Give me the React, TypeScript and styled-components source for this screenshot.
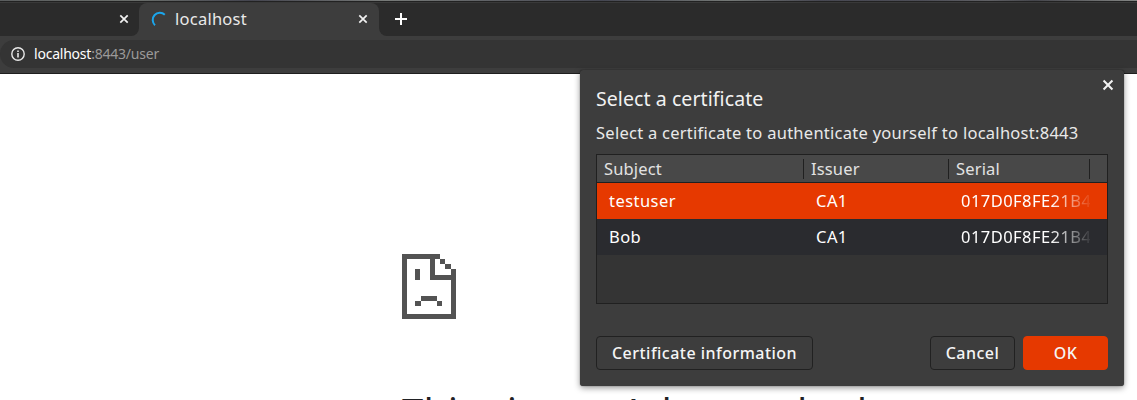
import React from 'react';
import styled, { createGlobalStyle, css } from 'styled-components';

const GlobalStyle = createGlobalStyle`
  * { box-sizing: border-box; }
  html, body { margin: 0; height: 100%; overflow: hidden; background: #fff; }
  body, button { font-family: "Noto Sans", "Open Sans", sans-serif; }
  svg { display: block; flex: none; }
`;

const Window = styled.div`
  position: relative;
  height: 400px;
  display: flex;
  flex-direction: column;
  overflow: hidden;
`;

const Frame = styled.div`
  height: 3px;
  flex: none;
  background: linear-gradient(90deg, #5a5d5e, #6b6f6c 12%, #44454f 22%, #777a78 34%, #454752 53%, #747876 64%, #474852 72%, #4d4e57 81%, #5f6064 87%, #45464c 91%, #858785) top / 100% 1px no-repeat, linear-gradient(#222 2px, #393939 2px);
`;

const TabStrip = styled.div`
  display: flex;
  height: 33px;
  flex: none;
  background: #3d3d3d;
`;

const tabLayout = css`
  display: flex;
  align-items: center;
  height: 33px;
  padding-bottom: 1px;
`;

const IdleTab = styled.div`
  ${tabLayout}
  width: 139px;
  justify-content: flex-end;
  padding-right: 10px;
  background: #2b2b2b;
  border-bottom-right-radius: 8px;
`;

const ActiveTabSlot = styled.div`
  width: 240px;
  background: #2b2b2b;
`;

const ActiveTab = styled.div`
  ${tabLayout}
  padding: 0 11px 1px 12px;
  background: #3d3d3d;
  border-radius: 8px 8px 0 0;
`;

const TabTitle = styled.span`
  flex: 1;
  padding-left: 8px;
  color: #e9e9e9;
  font-size: 16.5px;
  line-height: 22px;
  letter-spacing: 0.25px;
`;

const StripRest = styled.div`
  ${tabLayout}
  flex: 1;
  padding-left: 15px;
  background: #2b2b2b;
  border-bottom-left-radius: 8px;
`;

const Toolbar = styled.div`
  height: 38px;
  flex: none;
  padding: 4px 0 5px;
  background: #3d3d3d;
  border-bottom: 1px solid #1f1f1f;
`;

const AddressBar = styled.div`
  display: flex;
  align-items: center;
  height: 28px;
  padding-left: 11px;
  gap: 9px;
  background: #343434;
  border-radius: 14px 0 0 14px;
`;

const Url = styled.span`
  color: #9b9a99;
  font-size: 14px;
  line-height: 20px;
  letter-spacing: -0.22px;
`;

const Host = styled.span`
  color: #fff;
`;

const Page = styled.main`
  flex: 1;
  padding: 180px 0 0 402px;
  overflow: hidden;
`;

const ErrorTitle = styled.h1`
  margin: 66px 0 0;
  color: #202124;
  font-size: 38px;
  font-weight: 400;
  line-height: 52px;
  letter-spacing: 0.7px;
  white-space: nowrap;
`;

const Dialog = styled.section`
  position: absolute;
  left: 580px;
  top: 70px;
  width: 544px;
  height: 316px;
  display: flex;
  flex-direction: column;
  padding: 16px;
  background: #3d3d3d;
  border-radius: 3px;
  box-shadow: 0 0 1px rgba(0, 0, 0, 0.7), 0 2px 6px rgba(0, 0, 0, 0.4);
  color: #f2f2f2;
`;

const CloseDialog = styled.button`
  position: absolute;
  top: 9px;
  right: 10px;
  padding: 0;
  border: 0;
  background: none;
`;

const DialogTitle = styled.h2`
  margin: 0;
  font-size: 19.5px;
  font-weight: 400;
  line-height: 26px;
  letter-spacing: 0.08px;
`;

const Prompt = styled.p`
  margin: 9px 0 10px;
  color: #e9e9e9;
  font-size: 16.5px;
  line-height: 23px;
  letter-spacing: 0.265px;
  white-space: nowrap;
`;

const Table = styled.div`
  height: 150px;
  border: 1px solid #202020;
  background: #343434;
  font-size: 16.5px;
  line-height: 24px;
  overflow: hidden;
`;

const columns = css`
  display: grid;
  grid-template-columns: 207px 145px 141px 1fr;
  align-items: center;
`;

const HeaderRow = styled.div`
  ${columns}
  height: 28px;
  background: #484848;
  border-bottom: 1px solid #202020;
  color: #e2e2e2;
  letter-spacing: 0.15px;
`;

const HeaderCell = styled.div`
  height: 20px;
  padding-left: 7px;
  border-right: 1px solid #202020;
  line-height: 20px;
`;

const Row = styled.div<{ $selected?: boolean }>`
  ${columns}
  height: 36px;
  background: ${p => (p.$selected ? '#e63900' : '#2a2b2f')};
  color: #fff;
  letter-spacing: 0.45px;
`;

const Cell = styled.div<{ $fade?: boolean }>`
  padding-left: 12px;
  overflow: hidden;
  white-space: nowrap;
  ${p => p.$fade && css`mask-image: linear-gradient(90deg, #000 102px, transparent 144px);`}
`;

const Actions = styled.div`
  display: flex;
  gap: 8px;
  margin-top: 32px;
`;

const Button = styled.button<{ $primary?: boolean; $width: number; $push?: boolean }>`
  width: ${p => p.$width}px;
  height: 34px;
  padding: 0;
  margin-right: ${p => (p.$push ? 'auto' : '0')};
  border: 1px solid ${p => (p.$primary ? '#e63900' : '#212121')};
  border-radius: 4px;
  background: ${p => (p.$primary ? '#e63900' : 'transparent')};
  color: #f5f5f5;
  font-size: 16px;
  font-weight: 500;
  line-height: 22px;
  letter-spacing: 0.47px;
`;

const Cross = ({ size = 10, weight = 1.7 }: { size?: number; weight?: number }) => (
  <svg width={size} height={size} viewBox="0 0 10 10" stroke="#f2f2f2" strokeWidth={weight}>
    <path d="M1.3 1.3L8.7 8.7M8.7 1.3L1.3 8.7" />
  </svg>
);

const Spinner = () => (
  <svg width="16" height="16" viewBox="0 0 16 16" fill="none" stroke="#1ba6ec" strokeWidth="2">
    <path d="M4 14.2A6.7 6.7 0 0 1 13.8 3.7" />
  </svg>
);

const Plus = () => (
  <svg width="14" height="14" viewBox="0 0 14 14" stroke="#fff" strokeWidth="2">
    <path d="M1 7H13M7 1V13" />
  </svg>
);

const InfoIcon = () => (
  <svg width="14" height="14" viewBox="0 0 14 14" fill="none" stroke="#e8e8e8">
    <circle cx="7" cy="7" r="6.2" strokeWidth="1.4" />
    <path d="M7 6V10.5M7 3.4V5" strokeWidth="1.6" />
  </svg>
);

const SadPage = () => (
  <svg width="54" height="65" viewBox="0 0 54 65" fill="#535353" shapeRendering="crispEdges">
    <path d="M0 0H38V5H33V21H54V65H0ZM5 5V60H49V26H28V5Z" fillRule="evenodd" />
    <path d="M38 5H43V10H38ZM43 10H49V15H43ZM49 15H54V26H49Z" />
    <path d="M13 15H18V26H13ZM19 42H35V47H19ZM13 47H19V52H13ZM35 47H40V52H35Z" />
  </svg>
);

const certificates = [
  { subject: 'testuser', issuer: 'CA1', serial: '017D0F8FE21B4' },
  { subject: 'Bob', issuer: 'CA1', serial: '017D0F8FE21B4' },
];

export default function App() {
  return (
    <Window>
      <GlobalStyle />
      <Frame />
      <TabStrip>
        <IdleTab><Cross /></IdleTab>
        <ActiveTabSlot>
          <ActiveTab>
            <Spinner />
            <TabTitle>localhost</TabTitle>
            <Cross />
          </ActiveTab>
        </ActiveTabSlot>
        <StripRest><Plus /></StripRest>
      </TabStrip>
      <Toolbar>
        <AddressBar>
          <InfoIcon />
          <Url><Host>localhost</Host>:8443/user</Url>
        </AddressBar>
      </Toolbar>
      <Page>
        <SadPage />
        <ErrorTitle>This site can’t be reached</ErrorTitle>
      </Page>
      <Dialog>
        <CloseDialog aria-label="Close"><Cross size={12} /></CloseDialog>
        <DialogTitle>Select a certificate</DialogTitle>
        <Prompt>Select a certificate to authenticate yourself to localhost:8443</Prompt>
        <Table>
          <HeaderRow>
            <HeaderCell>Subject</HeaderCell>
            <HeaderCell>Issuer</HeaderCell>
            <HeaderCell>Serial</HeaderCell>
          </HeaderRow>
          {certificates.map((c, i) => (
            <Row key={c.subject} $selected={i === 0}>
              <Cell>{c.subject}</Cell>
              <Cell>{c.issuer}</Cell>
              <Cell $fade>{c.serial}</Cell>
            </Row>
          ))}
        </Table>
        <Actions>
          <Button $width={217} $push>Certificate information</Button>
          <Button $width={85}>Cancel</Button>
          <Button $width={85} $primary>OK</Button>
        </Actions>
      </Dialog>
    </Window>
  );
}
